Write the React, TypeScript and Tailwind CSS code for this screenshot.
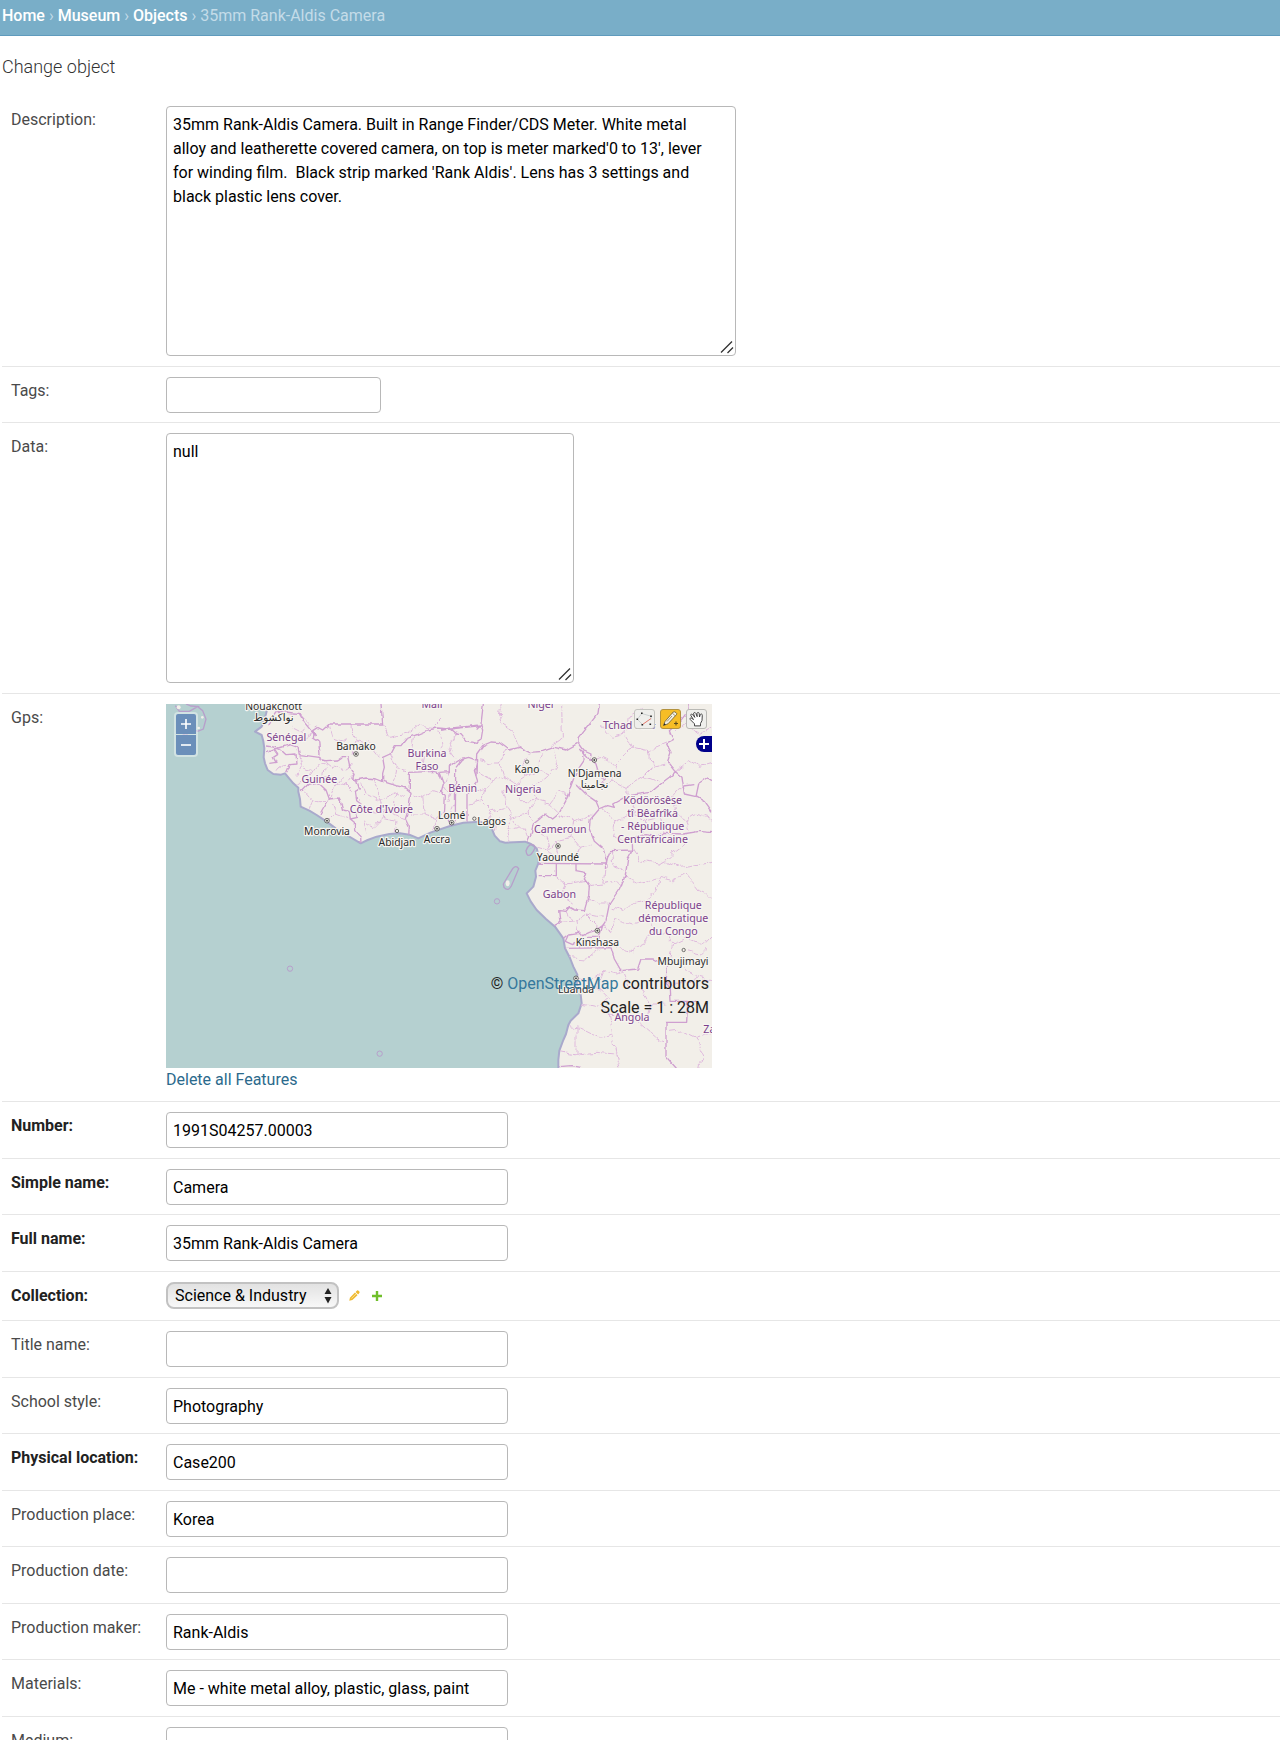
import React, { useState } from 'react';

interface Field {
  id: string;
  label: string;
  value: string;
  required?: boolean;
}

const mainFields: Field[] = [
  { id: 'number', label: 'Number', value: '1991S04257.00003', required: true },
  { id: 'simple_name', label: 'Simple name', value: 'Camera', required: true },
  { id: 'full_name', label: 'Full name', value: '35mm Rank-Aldis Camera', required: true },
];

const detailFields: Field[] = [
  { id: 'title_name', label: 'Title name', value: '' },
  { id: 'school_style', label: 'School style', value: 'Photography' },
  { id: 'physical_location', label: 'Physical location', value: 'Case200', required: true },
  { id: 'production_place', label: 'Production place', value: 'Korea' },
  { id: 'production_date', label: 'Production date', value: '' },
  { id: 'production_maker', label: 'Production maker', value: 'Rank-Aldis' },
  { id: 'materials', label: 'Materials', value: 'Me - white metal alloy, plastic, glass, paint' },
  { id: 'medium', label: 'Medium', value: '' },
];

const descriptionText =
  "35mm Rank-Aldis Camera. Built in Range Finder/CDS Meter. White metal alloy and leatherette covered camera, on top is meter marked'0 to 13', lever for winding film.  Black strip marked 'Rank Aldis'. Lens has 3 settings and black plastic lens cover.";

const LAND =
  'M307,-20 L307,0 300,30 287,68 267,83 287,93 292,112 295,133 293,160 297,178 305,198 322,210 345,212 357,208 370,224 382,238 397,251 397,263 402,285 404,308 430,320 452,333 482,353 510,374 542,393 584,418 605,408 632,398 670,390 702,388 730,392 757,403 795,385 852,366 892,356 942,353 962,362 977,373 986,395 1002,412 1018,416 1077,413 1095,420 1112,433 1119,460 1117,478 1108,500 1110,518 1102,548 1082,568 1094,592 1112,618 1140,645 1167,668 1192,703 1197,733 1212,762 1222,788 1234,812 1232,838 1244,872 1247,898 1237,928 1214,950 1207,963 1200,990 1192,1008 1180,1040 1177,1068 1177,1120 1660,1120 1660,-20Z';

// the map is drawn at three units to the pixel
const BORDERS = [
  // west africa
  'M380,27 400,28 415,55 435,80 448,95 440,80 455,70 470,78 490,60 640,60 650,60 645,0',
  'M305,64 330,22 360,24 380,27',
  'M445,84 442,102 458,112 462,150 460,160 400,152 396,130 372,122 340,132 300,126',
  'M462,158 462,168 480,170 515,168 530,158 545,158 552,190 565,208 560,225 572,228 580,255 568,262 572,290 585,300 570,325 575,340 553,345 565,355 566,380 584,400 585,418',
  'M300,146 325,136 345,138 360,152 390,150 393,180 372,182 362,205',
  'M325,138 335,152 322,160 330,175 310,178',
  'M404,264 425,242 455,235 480,258 490,285 470,318 462,333',
  'M490,285 520,282 530,318 550,322 553,345',
  'M572,228 600,222 632,225 650,232 650,208 655,190 650,160 672,150 685,125 705,125 720,105 745,95 785,78 815,72 852,75',
  'M650,232 690,245 720,252 735,265 728,315 718,345 730,370 728,390',
  'M730,258 730,205 805,202 820,208 832,240 826,262 838,278 835,330 848,350 850,366',
  'M852,75 870,90 885,92 900,110 930,118 945,108 950,78 945,65 825,78',
  'M820,205 850,203 850,188 890,162 897,162',
  'M869,195 868,355',
  'M903,270 903,352 M903,270 935,232 925,200 935,170 908,160 890,165 870,190',
  'M952,0 945,60 932,74 M825,78 852,72 900,68 950,62',
  // nigeria and chad
  'M930,215 932,150 950,125 975,114 1000,116 1030,138 1060,130 1090,145 1130,142 1165,130 1200,138 1235,118',
  'M1300,0 1296,28 1265,68 1240,100 1238,120 1252,140 1254,170 1230,205 1215,245 1200,290 1178,330 1160,345 1140,330 1102,360 1095,390 1084,413',
  'M1252,140 1275,150 1270,170 1240,135 M1270,160 1290,180 1300,215 1318,225 1305,235',
  'M1230,240 1265,275 1290,292 1300,315 1325,305 1345,310 1340,300 1385,275 1455,265 1490,235 1510,220 1530,202',
  'M1565,0 1567,20 1540,55 1510,80 1522,110 1502,120 1515,145 1505,175 1525,200 1548,220 1555,270 1590,278 1598,240 1625,222 1638,230',
  'M1555,246 1585,242 M1590,275 1615,290 1638,322',
  'M1300,315 1272,348 1270,375 1285,412 1312,435 1322,475 1318,490 1325,460 1335,440 1400,438 1398,400 1440,392 1475,398 1495,388 1550,390 1600,382 1638,386',
  'M1117,478 1320,480',
  'M1400,438 1385,465 1378,515 1360,555 1330,600 1320,650 1310,665',
  'M1171,478 1171,515 1118,515',
  'M1230,478 1230,500 1262,506 1255,525 1270,545 1268,575 1255,620 1225,618 1210,610 1200,622 1178,620 1182,655 1165,665',
  // congo and angola
  'M1192,703 1208,690 1240,685 1250,695 1270,685 1288,680 1310,665 1300,700 1280,700 1262,700',
  'M1208,690 1198,712 1220,722 1230,715',
  'M1198,733 1335,731 1345,765 1365,800 1415,795 1425,765 1462,765 1480,775 1505,775 1500,835 1510,855 1512,892 1565,892 1590,895',
  'M1565,892 1562,955 1500,955 1500,1058 1530,1092',
  'M1180,1088 1215,1085 1245,1090',
];

const PROVINCES = [
  'M400,28 430,60 410,85 380,70 M440,90 410,110 380,100',
  'M462,160 500,190 530,200 560,180 M480,170 470,210 500,230 540,240 565,208',
  'M397,240 430,220 450,190 480,170 M530,220 500,260 490,285 M540,240 560,260 M330,200 340,185 360,180 M400,152 410,185 440,200 M410,185 393,215',
  'M650,60 670,100 720,90 760,60 800,70 830,40 M555,66 570,110 555,155 M570,110 610,120 640,160 M490,60 500,100 540,110',
  'M590,230 600,270 580,290 M600,270 640,290 690,270 720,280 M640,290 650,340 630,370 600,360 M690,270 680,330 720,345 M650,340 690,350 685,385 M620,225 640,260 640,290 M600,320 640,325 M590,350 600,390',
  'M670,150 690,190 720,200 M745,95 740,140 770,160 760,202 M770,160 810,150 830,120 815,75 M690,190 680,240',
  'M740,270 770,280 800,260 830,270 M770,280 775,330 735,330 M775,330 810,340 800,380 M810,340 836,320',
  'M850,205 835,240 855,270 840,300 M868,250 845,300 M868,300 850,340 M870,90 850,130 870,160 M415,260 440,290 480,290 M440,290 430,320 M500,300 510,330 490,350 M510,330 550,345',
  'M940,210 980,230 1010,215 1000,180 1020,140 M1010,215 1050,240 1080,220 1070,180 1090,145 M1080,220 1120,200 1150,215 1175,180 1160,130 M940,170 975,180 1000,180 M1120,200 1120,160 1130,142',
  'M905,300 950,290 980,320 960,350 M980,320 1020,310 1040,340 1020,380 1030,412 M1040,340 1080,330 1100,350 M1020,310 1010,260 1050,240 M1080,330 1110,290 1150,300 1175,325 M1110,290 1100,250 1150,215 M1150,300 1180,260 1205,270 M920,260 960,250 980,230 M950,290 960,250 M1000,340 990,380 M1050,240 1060,290 1110,290',
  'M1020,380 1060,370 1080,395 M1050,345 1060,370 M1010,60 1040,80 1060,130 M1190,0 1192,100 1150,130 M1010,0 1000,30 1010,60',
  'M1300,60 1340,100 1380,90 1400,130 1450,140 1500,120 M1380,90 1390,40 1430,10 M1270,170 1310,160 1350,180 1370,160 1400,130 M1350,180 1340,230 1380,250 1385,275 M1380,250 1430,220 1480,230 M1450,140 1460,190 1430,220 M1530,80 1560,60 1600,90 1638,70 M1530,202 1570,170 1600,190 1638,180 M1340,230 1310,240 M1460,190 1500,180',
  'M1180,330 1220,350 1260,340 M1220,350 1215,400 1240,430 1280,420 M1215,400 1170,410 1150,440 1115,430 M1240,430 1230,478 M1170,410 1180,460 M1150,440 1160,478 M1110,370 1140,400 1150,440 M1260,340 1280,330',
  'M1310,320 1350,350 1340,390 1370,410 1398,400 M1350,350 1400,330 1440,350 1480,340 1500,388 M1440,350 1430,392 M1480,340 1530,330 1560,350 1590,330 1638,345 M1560,350 1570,388 M1400,330 1410,280 M1530,330 1520,270 1555,246',
  'M1335,440 1340,480 1380,500 M1270,545 1310,540 1350,530 1365,545 M1171,515 1200,540 1190,580 1220,600 M1200,540 1255,530 M1150,560 1190,580 M1270,580 1300,600 1330,600 M1320,480 1310,540',
  'M1182,655 1230,650 1260,630 1310,640 M1230,650 1235,685 M1260,630 1290,660 1288,680 M1200,622 1215,650',
  'M1400,438 1420,470 1480,480 1500,470 1540,490 1638,475 M1380,520 1420,540 1480,520 1520,530 1560,510 M1480,480 1520,450 1560,420 M1560,510 1600,560 1638,580',
  'M1340,610 1380,620 1400,600 1440,590 1470,560 1480,520 M1310,665 1340,680 1350,645 1400,660 1440,650 1460,670 M1345,730 1400,740 1440,720 1450,690 1500,690 1520,720 1560,700 M1520,720 1510,770 M1560,700 1600,720 1638,700 M1560,740 1600,750 1620,730',
  'M1200,760 1260,765 1290,745 1300,735 M1230,820 1270,830 1310,800 1350,810 1370,800 M1310,800 1290,850 1330,890 1300,910 M1250,900 1300,910 1330,930 1400,940 1470,1000 1500,1010 M1330,930 1340,990 1300,1000 1240,970 1210,965 M1340,990 1350,1050 1360,1095 M1180,1040 1230,1050 1290,1045 1350,1050 M1230,970 1230,1050 M1370,800 1390,850 1430,860 1450,900 1500,900 M1450,900 1440,950 1400,940',
  'M1500,835 1560,840 1600,820 1638,830 M1512,985 1550,980 1590,1000 1638,985 M1590,1000 1610,1050 1600,1095 M1540,770 1560,800 1600,820',
];

const ISLANDS = [
  'M28,5 40,22 70,22 95,8 110,20 120,45 112,75 95,82 70,70 62,95 50,90 M60,0 75,6 100,8',
  'M1080,440 q10,-25 24,-16 q8,6 -8,26 q-14,12 -16,-10Z',
  'M1012,540 1040,494 q10,-12 18,0 L1036,546 q-10,18 -22,4Z',
];

interface MapLabel {
  x: number;
  y: number;
  lines: string[];
}

const COUNTRIES: MapLabel[] = [
  { x: 361, y: 100, lines: ['Sénégal'] },
  { x: 460, y: 226, lines: ['Guinée'] },
  { x: 646, y: 316, lines: ["Côte d'Ivoire"] },
  { x: 783, y: 147, lines: ['Burkina', 'Faso'] },
  { x: 798, y: 0, lines: ['Mali'] },
  { x: 1126, y: 0, lines: ['Niger'] },
  { x: 890, y: 253, lines: ['Bénin'] },
  { x: 1072, y: 254, lines: ['Nigeria'] },
  { x: 1390, y: 64, lines: ['Tchad تشاد'] },
  { x: 1183, y: 374, lines: ['Cameroun'] },
  { x: 1460, y: 288, lines: ['Ködörösêse', 'tî Bêafrîka', '- République', 'Centrafricaine'] },
  { x: 1180, y: 571, lines: ['Gabon'] },
  { x: 1522, y: 603, lines: ['République', 'démocratique', 'du Congo'] },
  { x: 1398, y: 939, lines: ['Angola'] },
  { x: 1668, y: 975, lines: ['Zambia'] },
];

const CITIES: MapLabel[] = [
  { x: 323, y: 5, lines: ['Nouakchott', 'نواكشوط'] },
  { x: 570, y: 127, lines: ['Bamako'] },
  { x: 483, y: 381, lines: ['Monrovia'] },
  { x: 693, y: 414, lines: ['Abidjan'] },
  { x: 813, y: 404, lines: ['Accra'] },
  { x: 857, y: 333, lines: ['Lomé'] },
  { x: 977, y: 351, lines: ['Lagos'] },
  { x: 1083, y: 196, lines: ['Kano'] },
  { x: 1286, y: 206, lines: ["N'Djamena", 'نجامينا'] },
  { x: 1176, y: 459, lines: ['Yaoundé'] },
  { x: 1294, y: 713, lines: ['Kinshasa'] },
  { x: 1551, y: 770, lines: ['Mbujimayi'] },
  { x: 1230, y: 855, lines: ['Luanda'] },
];

const CAPITALS = [[570, 150], [483, 350], [813, 374], [857, 356], [1285, 168], [1176, 426], [1294, 680], [1230, 823]];
const TOWNS = [[693, 381], [925, 344], [1083, 173], [1553, 738]];
const ISLETS = [[993, 592], [372, 794], [641, 1049]];

const MapDrawing = () => (
  <svg viewBox="0 0 1638 1092" className="block h-full w-full" role="img" aria-label="Map of West and Central Africa">
    <defs>
      <filter id="rough" x="0" y="0" width="1638" height="1092" filterUnits="userSpaceOnUse">
        <feTurbulence type="fractalNoise" baseFrequency="0.03" numOctaves="2" seed="4" />
        <feDisplacementMap in="SourceGraphic" scale="26" xChannelSelector="R" yChannelSelector="G" />
      </filter>
      <filter id="roughLine" x="0" y="0" width="1638" height="1092" filterUnits="userSpaceOnUse">
        <feTurbulence type="fractalNoise" baseFrequency="0.04" numOctaves="2" seed="9" />
        <feDisplacementMap in="SourceGraphic" scale="11" xChannelSelector="R" yChannelSelector="G" />
      </filter>
      <clipPath id="land">
        <path d={LAND} />
      </clipPath>
    </defs>
    <rect width="1638" height="1092" fill="#b5d0d0" />
    <path d={LAND} fill="#f2efe9" stroke="#a9a9cc" strokeWidth="6" strokeLinejoin="round" />
    <g clipPath="url(#land)" fill="none" strokeLinejoin="round">
      <g filter="url(#rough)" stroke="#dfb9dd" strokeWidth="3" strokeDasharray="18 3">
        {PROVINCES.map((d) => <path key={d} d={d} />)}
      </g>
      <g filter="url(#roughLine)" stroke="#cf9fd0" strokeWidth="4">
        {BORDERS.map((d) => <path key={d} d={d} />)}
      </g>
    </g>
    <g fill="none" stroke="#b79fcb" strokeWidth="4">
      {ISLANDS.map((d) => <path key={d} d={d} />)}
      {ISLETS.map(([x, y]) => <circle key={x} cx={x} cy={y} r="8" strokeWidth="3" />)}
    </g>
    <g fill="#f2efe9">
      <ellipse cx="1025" cy="538" rx="6" ry="9" />
      <circle cx="38" cy="10" r="6" />
      <circle cx="98" cy="72" r="4" />
      <circle cx="109" cy="40" r="4" />
    </g>
    <g
      textAnchor="middle"
      dominantBaseline="central"
      paintOrder="stroke"
      stroke="#f7f5f1"
      strokeWidth="7"
      strokeLinejoin="round"
      className="font-['Noto_Sans','DejaVu_Sans',sans-serif]"
    >
      <g fill="#7b3f8c" fontSize="32">
        {COUNTRIES.map((item) =>
          item.lines.map((line, i) => (
            <text key={line} x={item.x} y={item.y + i * 39}>{line}</text>
          ))
        )}
      </g>
      <g fill="#2b2b2b" fontSize="31">
        {CITIES.map((item) =>
          item.lines.map((line, i) => (
            <text key={line} x={item.x} y={item.y + i * 33}>{line}</text>
          ))
        )}
      </g>
    </g>
    <g fill="#f2efe9" stroke="#333333" strokeWidth="2">
      {CAPITALS.map(([x, y]) => (
        <g key={x}>
          <circle cx={x} cy={y} r="7" />
          <circle cx={x} cy={y} r="2" fill="#333333" />
        </g>
      ))}
      {TOWNS.map(([x, y]) => <circle key={x} cx={x} cy={y} r="5" strokeWidth="2" />)}
    </g>
  </svg>
);

const GpsMap = () => {
  const toolClass = 'flex h-5 w-[21px] items-center justify-center rounded-[3px] border';

  return (
    <div className="relative h-[364px] w-[546px] overflow-hidden">
      <MapDrawing />
      <div className="absolute left-2 top-2 flex w-6 flex-col gap-px rounded bg-white/40 p-[2px]">
        <button type="button" aria-label="Zoom in" className="flex h-5 items-center justify-center rounded-t-[2px] bg-[#6b8fba] text-white">
          <svg width="10" height="10" viewBox="0 0 10 10" stroke="currentColor" strokeWidth="1.6"><path d="M5 0v10M0 5h10" /></svg>
        </button>
        <button type="button" aria-label="Zoom out" className="flex h-5 items-center justify-center rounded-b-[2px] bg-[#6b8fba] text-white">
          <svg width="10" height="10" viewBox="0 0 10 10" stroke="currentColor" strokeWidth="1.6"><path d="M0 5h10" /></svg>
        </button>
      </div>
      <div className="absolute right-[5px] top-[5px] flex gap-[5px]">
        <button type="button" aria-label="Modify features" className={`${toolClass} border-[#c5c5c0] bg-[#efefec]`}>
          <svg width="19" height="18" viewBox="0 0 19 18" fill="none" className="shrink-0">
            <path d="M6.8 3.5 16 6.200V9.500 M6.8 3.5 2.300 9.300 7.500 14.500" stroke="#c3c9c9" strokeWidth="0.8" />
            <path d="M7.500 14.500 16 8.500" stroke="#e26a5c" strokeWidth="0.9" />
            <path d="M6 2.500h1.600v1.600H6zM15.200 5.500h1.600v1.600h-1.600zM1.500 8.500h1.600v1.600H1.500zM6.500 14h1.600v1.600H6.500zM14.500 13.500h1.600v1.600h-1.600z" fill="#222" />
          </svg>
        </button>
        <button type="button" aria-label="Draw path" className={`${toolClass} border-[#b3923e] bg-[#f6bd26]`}>
          <svg width="19" height="18" viewBox="0 0 19 18" fill="none" className="shrink-0">
            <path d="M2.500 15.500 4 11.500 12.200 2Q13.500 1.300 15 2.600T15.300 4.800L7 13.800Z" fill="#f3f1e6" stroke="#6b5b2c" strokeWidth="0.8" />
            <path d="M11.300 3.200 14.300 5.800M6 11.500 11 6" stroke="#8d7c4c" strokeWidth="0.8" />
            <path d="M2.500 15.500 3.300 13.200 5 14.600Z" fill="#222" />
            <path d="M15 11.500v4M13 13.500h4" stroke="#5b4b1c" strokeWidth="1.100" />
          </svg>
        </button>
        <button type="button" aria-label="Navigate" className={`${toolClass} border-[#b9b9b5] bg-[#efefec]`}>
          <svg width="19" height="18" viewBox="0 0 19 18" fill="#fff" stroke="#333" strokeWidth="0.900" strokeLinejoin="round" strokeLinecap="round" className="shrink-0">
            <path d="M7.500 15.500V13.800L3.300 9.600C2.400 8.400 3.500 7.500 4.700 8.300L6.500 9.600 3.900 5.600C3.300 4.200 4.800 3.500 5.700 4.700L7.800 7.400 6.600 3.800C6.400 2.400 8.200 2 8.800 3.300L10.200 6.700 10 3.400C10.300 2.100 12 2.300 12.200 3.500L12.500 7 13.300 4.600C14 3.500 15.500 4 15.300 5.400L15 10.500 13.500 13.400V15.500Z" />
          </svg>
        </button>
      </div>
      <button type="button" aria-label="Show layers" className="absolute right-0 top-8 flex h-4 w-4 items-center justify-center rounded-l-lg bg-[#00008b] text-white">
        <svg width="10" height="10" viewBox="0 0 10 10" stroke="currentColor" strokeWidth="2"><path d="M5 0v10M0 5h10" /></svg>
      </button>
      <div className="absolute bottom-12 right-[3px] text-right text-base leading-6 text-[#222222]">
        <p>© <a href="#osm" className="text-[#35789c]">OpenStreetMap</a> contributors</p>
        <p>Scale = 1 : 28M</p>
      </div>
    </div>
  );
};

interface FormRowProps {
  id: string;
  label: string;
  required?: boolean;
  children: React.ReactNode;
}

const FormRow: React.FC<FormRowProps> = ({ id, label, required = false, children }) => (
  <div className="flex items-start border-b border-[#e6e6e6] py-[10px] pl-[9px] even:pb-[9px]">
    <label
      htmlFor={id}
      className={`w-[155px] shrink-0 pt-[2px] text-base leading-6 ${required ? 'font-bold text-[#222222]' : 'text-[#4a4a4a]'}`}
    >
      {label}:
    </label>
    {children}
  </div>
);

const inputClass = 'h-9 rounded-[4px] border border-[#b8b8b8] bg-white px-[6px] text-base text-black';

const TextRow = ({ field }: { field: Field }) => (
  <FormRow id={field.id} label={field.label} required={field.required}>
    <input id={field.id} type="text" defaultValue={field.value} className={`${inputClass} w-[342px]`} />
  </FormRow>
);

interface TextAreaProps {
  id: string;
  value: string;
  width: string;
}

const TextArea: React.FC<TextAreaProps> = ({ id, value, width }) => (
  <div className={`relative ${width}`}>
    <textarea
      id={id}
      defaultValue={value}
      className="block h-[250px] w-full resize-none rounded-[4px] border border-[#b8b8b8] bg-white py-[6px] pl-[6px] pr-[18px] text-base leading-6 text-black"
    />
    <svg width="14" height="14" viewBox="0 0 14 14" className="pointer-events-none absolute bottom-[2px] right-[2px]">
      <path d="M1 12.500 12 1.500M7.500 13 13 7.500" stroke="#333333" strokeWidth="1.300" />
    </svg>
  </div>
);

const App = () => {
  const [collection, setCollection] = useState('Science & Industry');

  return (
    <div className="min-h-screen bg-white font-['Roboto',sans-serif]">
      <nav aria-label="Breadcrumb" className="border-b border-[#5f9bbd] bg-[#79aec8] pb-[7px] pl-[2px] pt-1 text-base leading-6 text-[#c4dce8]">
        <a href="#home" className="font-medium text-white">Home</a> ›{' '}
        <a href="#museum" className="font-medium text-white">Museum</a> ›{' '}
        <a href="#objects" className="font-medium text-white">Objects</a> › 35mm Rank-Aldis Camera
      </nav>

      <main className="pl-[2px]">
        <h1 className="pb-4 pt-[18px] text-lg font-light leading-[26px] text-[#333333]">Change object</h1>

        <form>
          <div>
            <FormRow id="description" label="Description">
              <TextArea id="description" value={descriptionText} width="w-[570px]" />
            </FormRow>
            <FormRow id="tags" label="Tags">
              <input id="tags" type="text" className={`${inputClass} w-[215px]`} />
            </FormRow>
            <FormRow id="data" label="Data">
              <TextArea id="data" value="null" width="w-[408px]" />
            </FormRow>
            <FormRow id="gps" label="Gps">
              <div id="gps">
                <GpsMap />
                <a href="#clear" className="block text-base leading-6 text-[#2b6a8c]">Delete all Features</a>
              </div>
            </FormRow>
          </div>

          <div>
            {mainFields.map((field) => <TextRow key={field.id} field={field} />)}
            <FormRow id="collection" label="Collection" required>
              <div className="flex items-center pb-[2px]">
                <div className="relative">
                  <select
                    id="collection"
                    value={collection}
                    onChange={(e) => setCollection(e.target.value)}
                    className="block h-[27px] w-[173px] appearance-none rounded-lg border-2 border-[#c2c2c2] bg-linear-to-b from-[#e2e2e2] to-[#f8f8f8] pl-[7px] text-base leading-[22px] text-black"
                  >
                    <option>Science & Industry</option>
                  </select>
                  <svg width="8" height="16" viewBox="0 0 8 16" className="pointer-events-none absolute right-[7px] top-[6px] fill-[#222222]">
                    <path d="M4 0 7.500 6H.5ZM4 15.500 7.500 9H.5Z" />
                  </svg>
                </div>
                <a href="#change" aria-label="Change collection" className="ml-[10px]">
                  <svg width="11" height="11" viewBox="0 0 12 12">
                    <path d="M0.300 11.700 1 8.500 6.500 2.800 9.300 5.600 3.700 11Z" fill="#efb92f" />
                    <path d="M7.200 2.100 8.800.6Q9.600 0 10.400.8L11.300 1.700Q12 2.500 11.300 3.200L9.900 4.800Z" fill="#efb92f" />
                    <path d="M2.600 9.300 7.600 4.300" stroke="#fbe5a8" strokeWidth="0.9" />
                  </svg>
                </a>
                <a href="#add" aria-label="Add collection" className="ml-3">
                  <svg width="10" height="10" viewBox="0 0 10 10" stroke="#70bf2b" strokeWidth="2.400"><path d="M5 0v10M0 5h10" /></svg>
                </a>
              </div>
            </FormRow>
          </div>

          <div>
            {detailFields.map((field) => <TextRow key={field.id} field={field} />)}
          </div>
        </form>
      </main>
    </div>
  );
};

export default App;
